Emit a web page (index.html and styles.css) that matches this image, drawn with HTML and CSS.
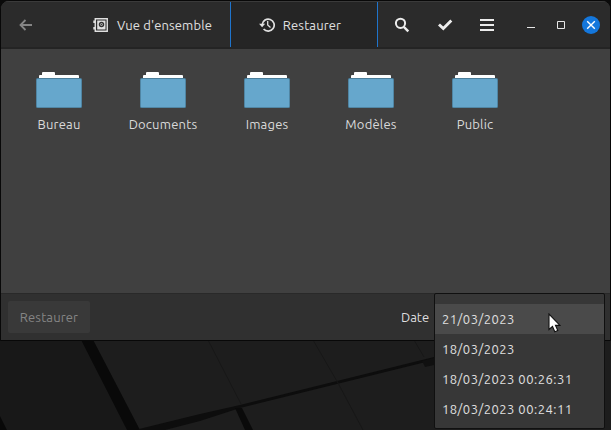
FILE: index.html
```html
<!DOCTYPE html>
<html lang="fr">
<head>
<meta charset="utf-8">
<title>Restaurer</title>
<link rel="stylesheet" href="styles.css">
</head>
<body>
<svg class="wallpaper" viewBox="0 0 611 430" aria-hidden="true">
  <rect width="611" height="430" fill="#1d1d1d"/>
  <path d="M0 330H77L132 430H0z" fill="#181818"/>
  <path d="M76 330H88L140 430H127z" fill="#090909"/>
  <path d="M0 416L7 430H0z" fill="#080808"/>
  <path d="M139 429L200 414 240 405 434 357V360L240 408 200 421 165 430H138z" fill="#0d0d0d"/>
  <path d="M235 408h7l11 22h-8z" fill="#0a0a0a"/>
  <path d="M422 361l12-3v7l-9 2z" fill="#101010"/>
  <path d="M208 340l33 64M313 340l25 43 25 47M414 340l10 17" fill="none" stroke="#171717"/>
</svg>
<main class="window">
  <header class="headerbar">
    <button class="back" aria-label="Retour"><svg width="14" height="14" viewBox="0 0 14 14"><path d="M13 7H2M6.500 2L1.500 7l5 5" fill="none" stroke="currentColor" stroke-width="1.800"/></svg></button>
    <nav class="tabs">
      <button class="tab overview">
        <svg width="16" height="16" viewBox="0 0 16 16"><path d="M2.250 1.750h12v12.500h-12z" fill="none" stroke="currentColor" stroke-width="1.400"/><path d="M.3 3.500h2v2.500h-2zM.3 10h2v2.500h-2z" fill="currentColor"/><path d="M4.200 3.500h8.300v9H4.200z" fill="currentColor"/><circle cx="8.500" cy="7.500" r="2" fill="#ececec" stroke="#333" stroke-width="1.500"/><circle cx="8.500" cy="7.500" r=".8" fill="#444"/></svg>
        <span>Vue d'ensemble</span>
      </button>
      <button class="tab active">
        <svg width="16" height="16" viewBox="0 0 16 16"><path d="M3.200 7.500A6 6 0 1 1 4.600 12" fill="none" stroke="currentColor" stroke-width="1.700"/><path d="M0 6.800h6.200L3.100 10.200z" fill="currentColor"/><path d="M8.700 4v4l2.800 2.500" fill="none" stroke="currentColor" stroke-width="1.300"/></svg>
        <span>Restaurer</span>
      </button>
    </nav>
    <div class="tools">
      <button aria-label="Rechercher"><svg width="16" height="16" viewBox="0 0 16 16"><circle cx="6.500" cy="6.300" r="4.600" fill="none" stroke="currentColor" stroke-width="2"/><path d="M9.800 9.800l4.500 4.500" stroke="currentColor" stroke-width="2.400"/></svg></button>
      <button aria-label="Sélectionner"><svg width="16" height="16" viewBox="0 0 16 16"><path d="M2 7.500l4.300 4L14.300 3.500" fill="none" stroke="currentColor" stroke-width="2.900"/></svg></button>
      <button aria-label="Menu"><svg width="16" height="16" viewBox="0 0 16 16"><path d="M1 3h14M1 8h14M1 13h14" stroke="currentColor" stroke-width="2"/></svg></button>
    </div>
    <div class="controls">
      <button aria-label="Réduire"><svg width="10" height="10" viewBox="0 0 10 10"><path d="M1 7.500h8" stroke="currentColor"/></svg></button>
      <button aria-label="Agrandir"><svg width="10" height="10" viewBox="0 0 10 10"><path d="M1.500 1.500h7v7h-7z" fill="none" stroke="currentColor"/></svg></button>
      <button class="close" aria-label="Fermer"><svg width="10" height="10" viewBox="0 0 10 10"><path d="M1.200 1.200l7.600 7.600M8.800 1.200L1.200 8.800" stroke="currentColor" stroke-width="1.400"/></svg></button>
    </div>
  </header>
  <section class="files">
    <div class="file"><svg width="48" height="40" viewBox="0 0 48 40"><use href="#folder"/></svg><span>Bureau</span></div>
    <div class="file"><svg width="48" height="40" viewBox="0 0 48 40"><use href="#folder"/></svg><span>Documents</span></div>
    <div class="file"><svg width="48" height="40" viewBox="0 0 48 40"><use href="#folder"/></svg><span>Images</span></div>
    <div class="file"><svg width="48" height="40" viewBox="0 0 48 40"><use href="#folder"/></svg><span>Modèles</span></div>
    <div class="file"><svg width="48" height="40" viewBox="0 0 48 40"><use href="#folder"/></svg><span>Public</span></div>
  </section>
  <footer class="actionbar">
    <button class="restore" disabled>Restaurer</button>
    <span class="date-label">Date</span>
  </footer>
</main>
<ul class="date-menu">
  <li class="selected">21/03/2023</li>
  <li>18/03/2023</li>
  <li>18/03/2023 00:26:31</li>
  <li>18/03/2023 00:24:11</li>
</ul>
<svg class="pointer" width="13" height="20" viewBox="0 0 13 20"><path d="M1 1v15.500l3.500-3 2.300 5.200 3-1.300-2.300-5H12z" fill="#fff" stroke="#111" stroke-width="1.100"/></svg>
<svg class="defs" width="0" height="0"><defs><g id="folder">
  <path d="M4 7V4q0-1 1-1h2V1q0-1 1-1h11q1 0 1 1v2h23q1 0 1 1v4H4z" fill="#fff"/>
  <rect x="1" y="6" width="46" height="30" rx="1.500" fill="#4b7d99"/>
  <rect x="1.800" y="7" width="44.400" height="28.200" rx="1" fill="#66a7cc"/>
</g></defs></svg>
</body>
</html>
```
FILE: styles.css
```css
* { box-sizing: border-box; }
body {
  margin: 0;
  width: 611px;
  height: 430px;
  overflow: hidden;
  position: relative;
  background: #1d1d1d;
  color: #dadada;
  font: 13px/18px Ubuntu, "Noto Sans", sans-serif;
}
button {
  display: flex;
  align-items: center;
  justify-content: center;
  padding: 0;
  border: 0;
  background: none;
  color: inherit;
  font: inherit;
  letter-spacing: 0.13px;
}
svg { display: block; flex: none; }
span, li { white-space: nowrap; }
.wallpaper { position: absolute; inset: 0; width: 611px; height: 430px; }
.defs { position: absolute; }
.window {
  position: relative;
  display: flex;
  flex-direction: column;
  width: 611px;
  height: 341px;
  border: 1px solid #080808;
  border-radius: 9px 9px 0 0;
  background: #404040;
  overflow: hidden;
  box-shadow: 0 0 0 9px #0a0a0a;
  clip-path: inset(-10px -10px 0 -10px);
}
.headerbar {
  display: flex;
  flex: none;
  height: 48px;
  background: #2b2b2b;
  border-top: 1px solid #3a3a3a;
  border-bottom: 2px solid #242424;
}
.back { width: 50px; color: #858585; }
.tabs { display: flex; margin-left: 25px; }
.tab { gap: 8px; color: #e0e0e0; }
.overview { width: 154px; padding-right: 1px; }
.active {
  width: 148px;
  padding-right: 8px;
  background: #252525;
  border-left: 1px solid #1f74cc;
  border-right: 1px solid #1f74cc;
}
.tools { display: flex; width: 138px; padding-left: 3px; color: #ececec; }
.tools button { width: 42.500px; }
.controls { display: flex; align-items: center; color: #e6e6e6; }
.controls button { width: 30px; height: 20px; }
.controls .close { width: 18px; height: 18px; margin-left: 6px; border-radius: 50%; background: #1477dc; color: #fff; }
.files { display: flex; flex: 1; padding: 23px 6px 0; }
.file { display: flex; flex-direction: column; align-items: center; gap: 3px; width: 104px; letter-spacing: 0.2px; }
.actionbar {
  display: flex;
  align-items: center;
  height: 47px;
  flex: none;
  padding: 0 7px;
  border-top: 1px solid #292929;
  background: #303030;
}
.restore { width: 82px; height: 32px; border-radius: 2px; background: #393939; color: #858585; }
.date-label { margin-left: 311px; color: #dedede; }
.date-menu {
  position: absolute;
  left: 434px;
  top: 293px;
  width: 171px;
  height: 136px;
  margin: 0;
  padding: 10px 0 4px;
  border: 1px solid #101010;
  border-radius: 2px;
  background: #373737;
  list-style: none;
  letter-spacing: 0.47px;
}
.date-menu li { height: 30px; padding-left: 7px; line-height: 31px; color: #e0e0e0; }
.date-menu .selected { background: #4a4a4a; }
.pointer { position: absolute; left: 548px; top: 313px; }
```
